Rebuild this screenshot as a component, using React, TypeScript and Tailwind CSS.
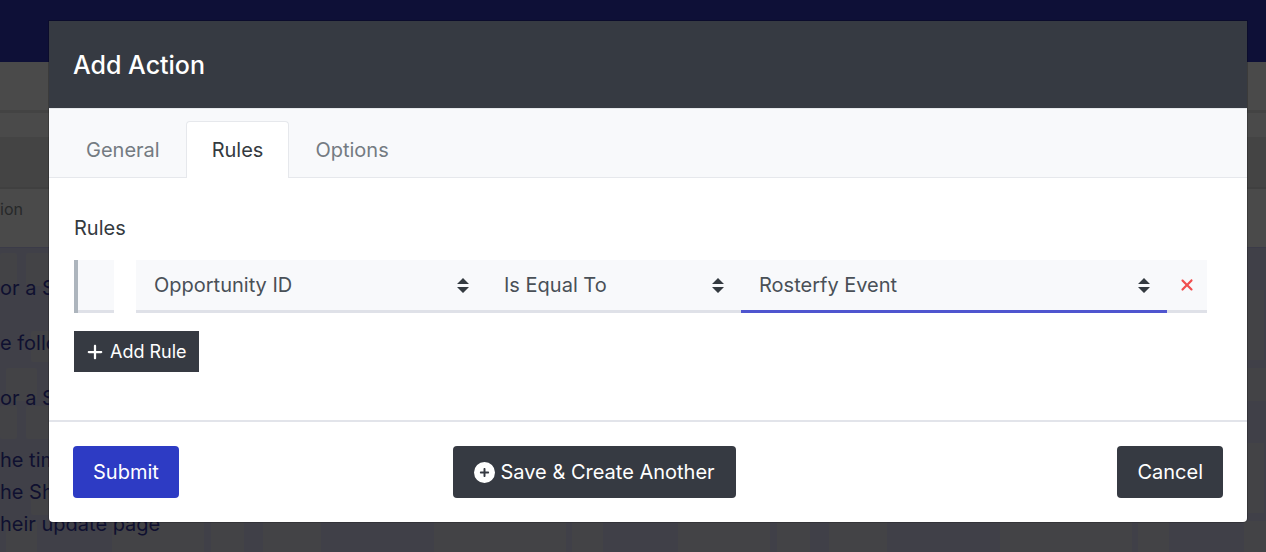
import { useState } from 'react';
import type { ReactNode } from 'react';
import { FaCirclePlus, FaPlus, FaXmark } from 'react-icons/fa6';

const tabs = ['General', 'Rules', 'Options'];

// Faint tiles printed behind the table of actions
const Watermark = () => (
    <svg className="absolute inset-0 h-full w-full" aria-hidden="true">
        <defs>
            <pattern id="tiles" width="566" height="153" patternUnits="userSpaceOnUse">
                <g fill="#434346">
                    <rect x="0" y="5" width="17" height="33" rx="3" />
                    <rect x="26" y="5" width="30" height="33" rx="3" />
                    <rect x="31" y="83" width="30" height="31" rx="3" />
                    <rect x="6" y="120" width="31" height="33" rx="3" />
                    <rect x="112" y="120" width="92" height="33" />
                    <rect x="211" y="120" width="33" height="33" rx="3" />
                    <rect x="263" y="120" width="58" height="33" />
                    <rect x="434" y="120" width="132" height="33" />
                    <rect x="115" y="42" width="17" height="70" />
                </g>
            </pattern>
        </defs>
        <rect width="100%" height="100%" fill="url(#tiles)" />
    </svg>
);

const PageBehind = () => (
    <div className="flex min-h-screen flex-col bg-[#4a4a4a]" aria-hidden="true">
        <div className="h-[62px] bg-[#0e1037]" />
        <div className="h-[51px] border-b-3 border-[#434343]" />
        <div className="h-6" />
        <div className="h-[52px] border-b-2 border-[#404040] bg-[#444444]" />
        <div className="h-[58px] pt-1 text-base leading-8 text-[#262829]">ion</div>
        <div className="relative flex-1 border-t border-[#3b3b48] bg-[#404048] text-xl text-[#0f1030]">
            <Watermark />
            <div className="relative pt-6">
                <p className="leading-8">or a S</p>
                <p className="mt-[23px] leading-8">e follo</p>
                <p className="mt-[23px] leading-8">or a S</p>
                <div className="mt-[30px] leading-8">
                    <p>he tim</p>
                    <p>he Sh</p>
                    <p>heir update page</p>
                </div>
            </div>
        </div>
    </div>
);

type RuleSelectProps = {
    label: string;
    active?: boolean;
    children: ReactNode;
};

const RuleSelect = ({ label, active, children }: RuleSelectProps) => (
    <div className="relative">
        <select
            aria-label={label}
            className={`block h-[53px] w-full appearance-none border-b-3 bg-[#f8f9fb] pr-10 pl-[18px] text-xl text-[#495057] outline-none ${
                active ? 'border-[#4f55cf]' : 'border-[#dfe1e8]'
            }`}
        >
            {children}
        </select>
        <svg
            viewBox="0 0 4 5"
            className="pointer-events-none absolute top-[18px] right-[17px] h-[15px] w-3 fill-[#343a40]"
            aria-hidden="true"
        >
            <path d="M2 0L0 2h4zm0 5L0 3h4z" />
        </svg>
    </div>
);

const App = () => {
    const [activeTab, setActiveTab] = useState('Rules');

    return (
        <div className="relative min-h-screen overflow-hidden font-['Inter','Liberation_Sans',sans-serif]">
            <PageBehind />

            <div className="absolute inset-0 pt-[21px] pr-[19px] pl-[49px]">
                <div
                    role="dialog"
                    aria-labelledby="dialog-title"
                    className="overflow-hidden rounded-b-sm bg-white text-[#343a40] shadow-[0_0_0_1px_rgba(0,0,0,0.2)]"
                >
                    <header className="bg-[#363a42] px-6 pt-6 pb-[22px]">
                        <h1 id="dialog-title" className="text-[25px] leading-[41px] font-medium text-white">
                            Add Action
                        </h1>
                    </header>

                    <div role="tablist" className="flex border-y border-[#e6e8ec] bg-[#f8f9fb] px-[11px] pt-3">
                        {tabs.map((tab) => (
                            <button
                                key={tab}
                                type="button"
                                role="tab"
                                aria-selected={tab === activeTab}
                                onClick={() => setActiveTab(tab)}
                                className={`-mb-px h-[57px] rounded-t-sm border border-b-0 px-[25px] text-xl ${
                                    tab === activeTab
                                        ? 'border-[#e6e8ec] bg-white text-[#343a40]'
                                        : 'border-transparent text-[#747b82]'
                                }`}
                            >
                                {tab}
                            </button>
                        ))}
                    </div>

                    <div className="px-[25px] pt-[34px] pb-12">
                        <h2 className="text-xl leading-8">Rules</h2>
                        <div className="mt-4 flex pr-[15px]">
                            <div className="mr-[22px] flex w-10 shrink-0">
                                <div className="w-1 bg-[#adb5bd]" />
                                <div className="flex-1 border-b-3 border-[#dfe1e8] bg-[#f8f9fb]" />
                            </div>
                            <div className="grid flex-1 grid-cols-[350fr_255fr_426fr_40px]">
                                <RuleSelect label="Field">
                                    <option>Opportunity ID</option>
                                </RuleSelect>
                                <RuleSelect label="Condition">
                                    <option>Is Equal To</option>
                                </RuleSelect>
                                <RuleSelect label="Value" active>
                                    <option>Rosterfy Event</option>
                                </RuleSelect>
                                <button
                                    type="button"
                                    aria-label="Remove rule"
                                    className="flex items-center justify-center border-b-3 border-[#dfe1e8] bg-[#f8f9fb] text-[#f04e4e]"
                                >
                                    <FaXmark className="size-[18px]" />
                                </button>
                            </div>
                        </div>
                        <button
                            type="button"
                            className="mt-[18px] flex h-[41px] items-center gap-1.5 bg-[#363a42] px-3 text-lg text-white"
                        >
                            <FaPlus className="size-[18px]" />
                            Add Rule
                        </button>
                    </div>

                    <footer className="flex border-t-2 border-[#e2e4ea] p-6">
                        <div className="w-[33%]">
                            <button type="button" className="h-[52px] rounded-sm bg-[#2d3bc4] px-5 text-xl text-white">
                                Submit
                            </button>
                        </div>
                        <button
                            type="button"
                            className="flex h-[52px] items-center gap-1.5 rounded-sm bg-[#363a42] px-[21px] text-xl text-white"
                        >
                            <FaCirclePlus className="size-[21px]" />
                            Save &amp; Create Another
                        </button>
                        <button
                            type="button"
                            className="ml-auto h-[52px] rounded-sm bg-[#363a42] px-5 text-xl text-white"
                        >
                            Cancel
                        </button>
                    </footer>
                </div>
            </div>
        </div>
    );
};

export default App;
